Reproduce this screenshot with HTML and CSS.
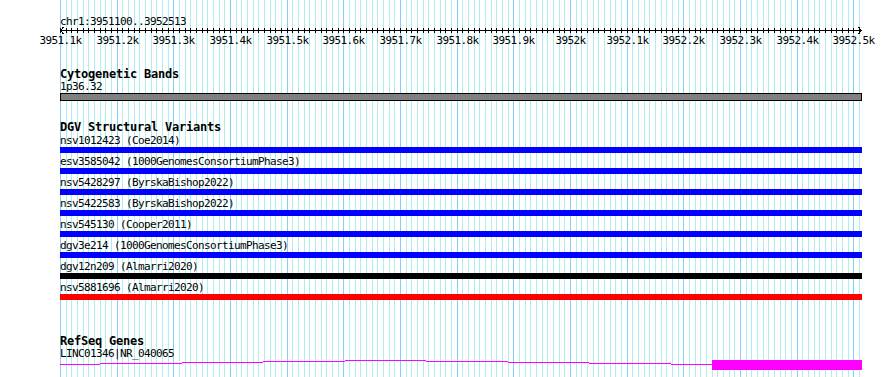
FILE: index.html
```html
<!DOCTYPE html>
<html lang="en">
<head>
    <title>chr1:3951100..3952513</title>
    <link rel="stylesheet" href="styles.css">
</head>
<body>
<div class="browser">
    <svg class="grid" width="890" height="377"></svg>

    <svg class="ruler" width="890" height="68">
        <text x="60" y="25">chr1:3951100..3952513</text>
        <g class="axis"></g>
    </svg>

    <div class="track cyto">
        <div class="track-title">Cytogenetic Bands</div>
        <div class="label">1p36.32</div>
        <div class="band"></div>
    </div>

    <div class="track dgv">
        <div class="track-title">DGV Structural Variants</div>
        <div class="feature">
            <div class="label">nsv1012423 (Coe2014)</div>
            <div class="bar blue"></div>
        </div>
        <div class="feature">
            <div class="label">esv3585042 (1000GenomesConsortiumPhase3)</div>
            <div class="bar blue"></div>
        </div>
        <div class="feature">
            <div class="label">nsv5428297 (ByrskaBishop2022)</div>
            <div class="bar blue"></div>
        </div>
        <div class="feature">
            <div class="label">nsv5422583 (ByrskaBishop2022)</div>
            <div class="bar blue"></div>
        </div>
        <div class="feature">
            <div class="label">nsv545130 (Cooper2011)</div>
            <div class="bar blue"></div>
        </div>
        <div class="feature">
            <div class="label">dgv3e214 (1000GenomesConsortiumPhase3)</div>
            <div class="bar blue"></div>
        </div>
        <div class="feature">
            <div class="label">dgv12n209 (Almarri2020)</div>
            <div class="bar black"></div>
        </div>
        <div class="feature">
            <div class="label">nsv5881696 (Almarri2020)</div>
            <div class="bar red"></div>
        </div>
    </div>

    <div class="track refseq">
        <div class="track-title">RefSeq Genes</div>
        <div class="label">LINC01346|NR_040065</div>
        <svg class="gene" width="802" height="12">
            <rect x="0" y="5" width="40" height="1"/>
            <rect x="40" y="4" width="82" height="1"/>
            <rect x="122" y="3" width="81" height="1"/>
            <rect x="203" y="2" width="82" height="1"/>
            <rect x="285" y="1" width="81" height="1"/>
            <rect x="366" y="2" width="82" height="1"/>
            <rect x="448" y="3" width="81" height="1"/>
            <rect x="529" y="4" width="82" height="1"/>
            <rect x="611" y="5" width="41" height="1"/>
            <rect x="652" y="1" width="150" height="10"/>
        </svg>
    </div>
</div>

<script>
    const start = 3951100
    const scale = 0.5667
    const ns = "http://www.w3.org/2000/svg"
    const toX = bp => 60 + (bp - start) * scale

    const makeLine = (x1, y1, x2, y2, cls) => {
        const line = document.createElementNS(ns, "line")
        line.setAttribute("x1", x1)
        line.setAttribute("y1", y1)
        line.setAttribute("x2", x2)
        line.setAttribute("y2", y2)
        if (cls) line.classList.add(cls)
        return line
    }

    const grid = document.querySelector(".grid")
    const axis = document.querySelector(".axis")

    // background grid, one line every 10bp
    for (let bp = start; bp <= 3952510; bp += 10) {
        const x = Math.round(toX(bp)) + 0.5
        grid.appendChild(makeLine(x, 0, x, 377, bp % 100 === 0 ? "major" : null))
        axis.appendChild(makeLine(x, 28, x, 33))

        if (bp % 100 === 0) {
            const label = document.createElementNS(ns, "text")
            label.setAttribute("x", x)
            label.setAttribute("y", 44)
            label.setAttribute("text-anchor", "middle")
            label.textContent = (bp / 1000) + "k"
            axis.appendChild(label)
        }
    }

    axis.appendChild(makeLine(60, 30.5, 862, 30.5))
    axis.appendChild(makeLine(63.5, 27, 60.5, 30.5))
    axis.appendChild(makeLine(60.5, 30.5, 63.5, 34))
    axis.appendChild(makeLine(858.5, 27, 861.5, 30.5))
    axis.appendChild(makeLine(861.5, 30.5, 858.5, 34))
</script>
</body>
</html>
```

FILE: styles.css
```css
body {
    margin: 0;
    background-color: #fff;
}

.browser {
    position: relative;
    z-index: 0;
    width: 890px;
    height: 377px;
    overflow: hidden;
    font-family: "DejaVu Sans Mono", "Liberation Mono", monospace;
    font-size: 11px;
    letter-spacing: -0.62px;
    color: #000;
}

.grid {
    position: absolute;
    top: 0;
    left: 0;
    z-index: -1;
}

.grid line {
    stroke: #afeeee;
    stroke-width: 1;
    shape-rendering: crispEdges;
}

.grid line.major {
    stroke: #87cefa;
}

.ruler {
    display: block;
}

.ruler line {
    stroke: #000;
    stroke-width: 1;
    shape-rendering: crispEdges;
}

.ruler text {
    font-size: 11px;
    fill: #000;
}

.track {
    padding-left: 60px;
}

.track-title {
    font-size: 12px;
    font-weight: bold;
    letter-spacing: -0.22px;
    line-height: 13px;
    height: 13px;
    white-space: nowrap;
}

.label {
    line-height: 13px;
    height: 13px;
    white-space: nowrap;
}

.cyto {
    margin-bottom: 20px;
}

.cyto .label {
    line-height: 12px;
    height: 12px;
}

.band {
    width: 800px;
    height: 6px;
    background-color: #808080;
    border: 1px solid #000;
}

.feature {
    margin-bottom: 2px;
}

.bar {
    width: 802px;
    height: 6px;
}

.bar.blue {
    background-color: #0000ff;
}

.bar.black {
    background-color: #000;
}

.bar.red {
    background-color: #ff0000;
}

.refseq {
    margin-top: 35px;
}

.refseq .label {
    line-height: 12px;
    height: 11px;
}

.gene {
    display: block;
    fill: #ff00ff;
}
```
